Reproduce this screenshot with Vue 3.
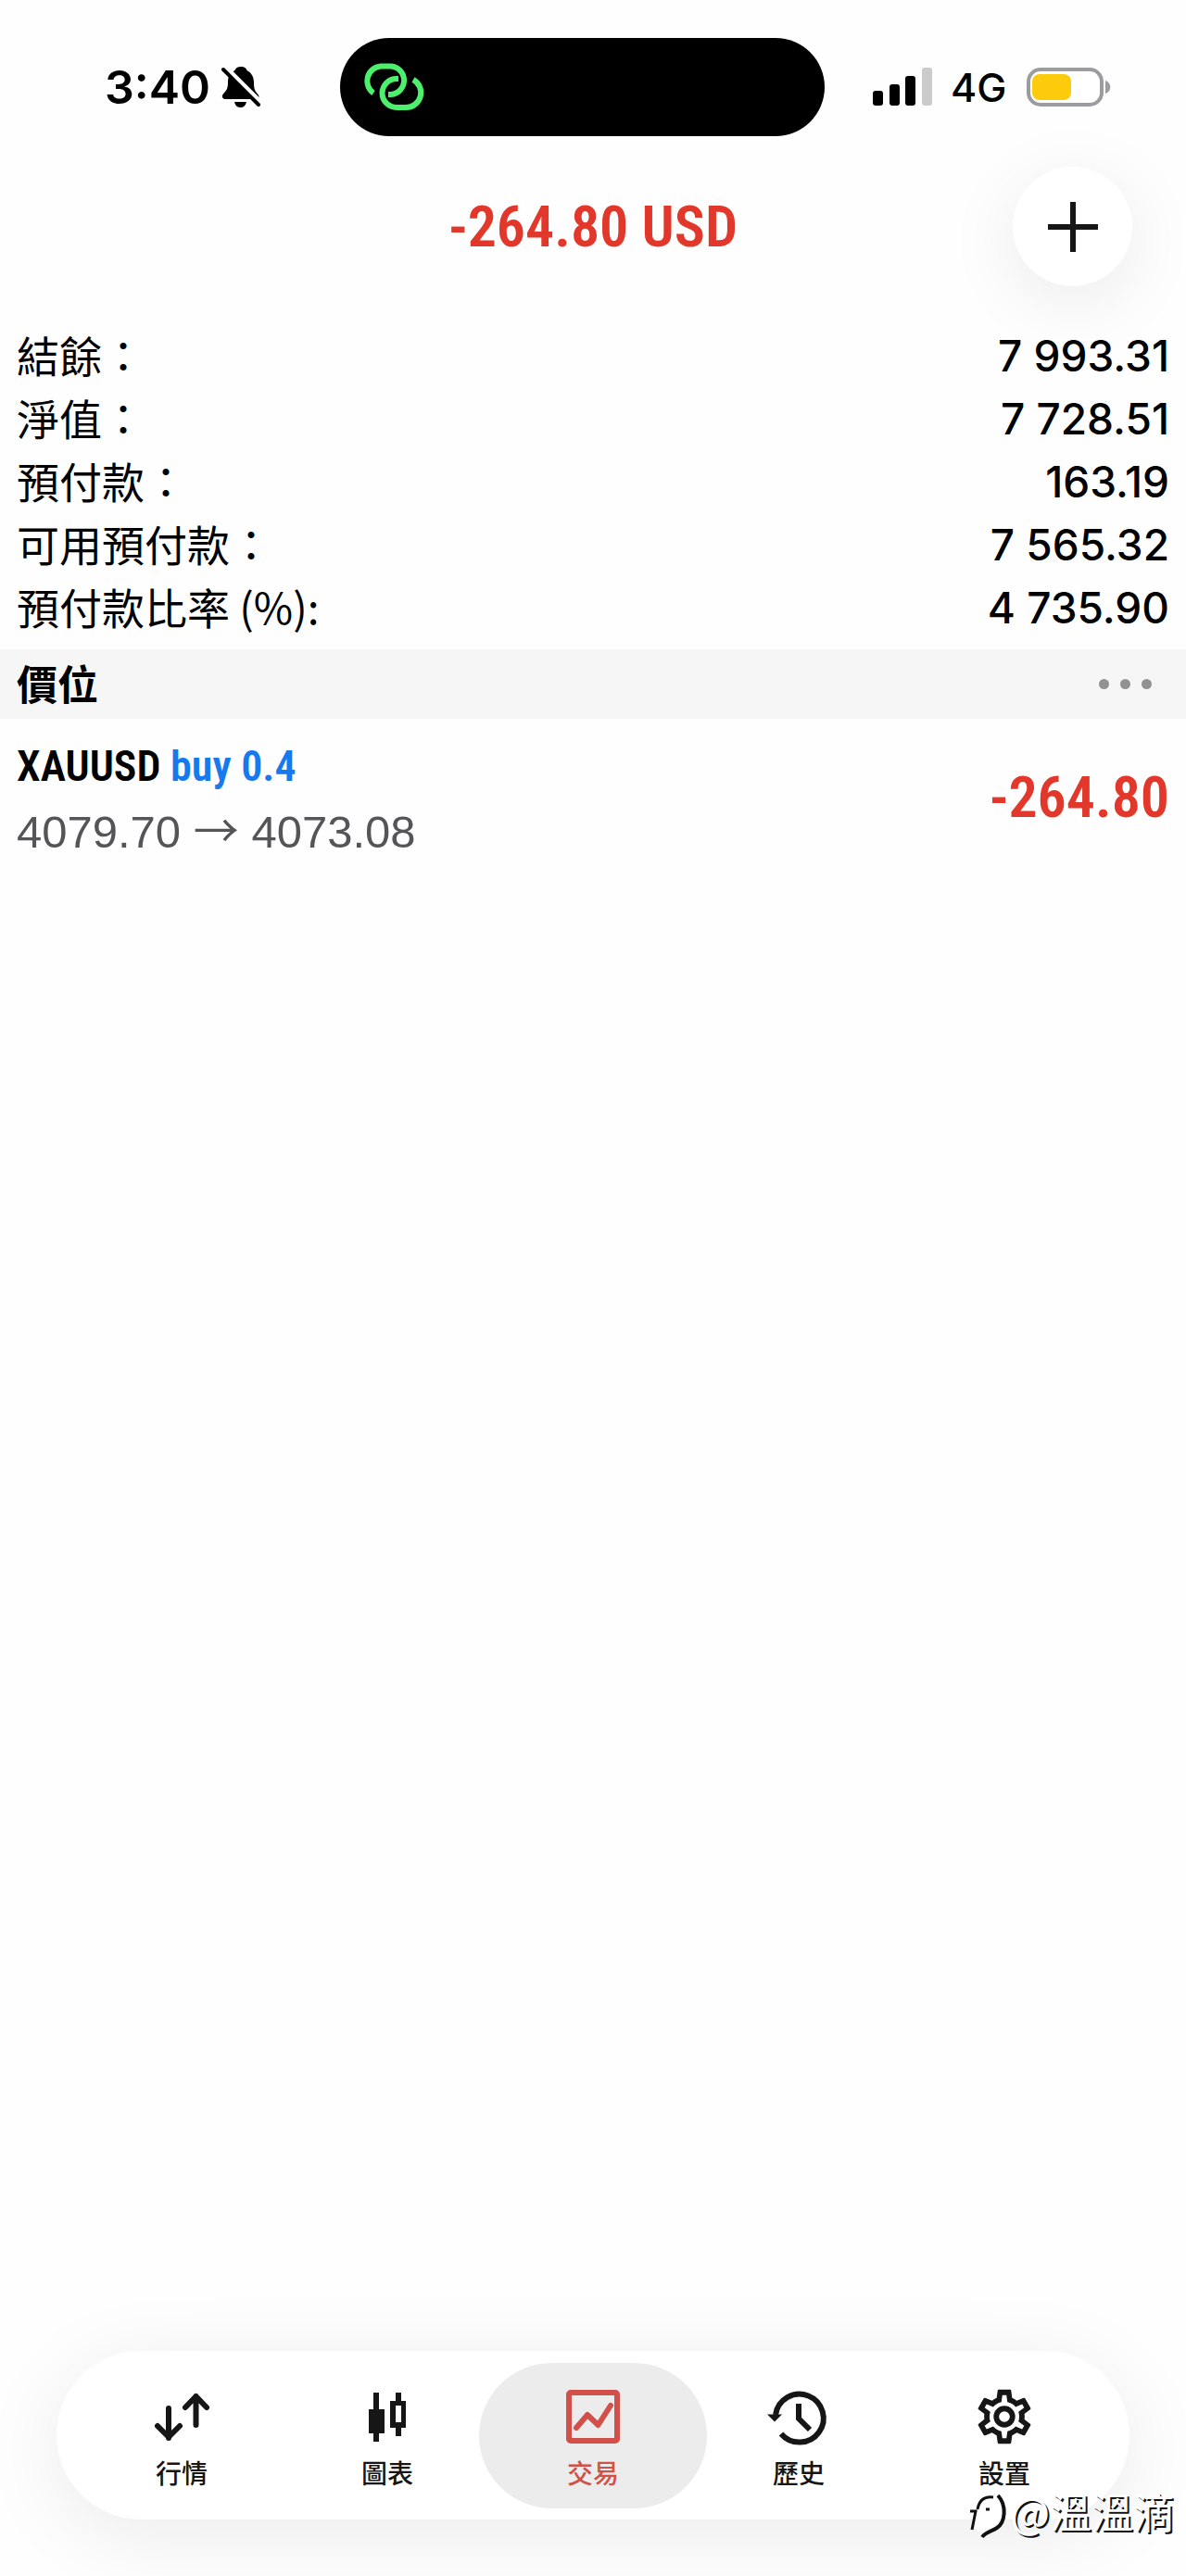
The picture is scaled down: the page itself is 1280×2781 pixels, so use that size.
<template>
  <div class="screen">
    <header class="status-bar">
      <div class="status-left">
        <span class="clock">3:40</span>
        <svg class="bell" viewBox="0 0 48 50" aria-label="Silent">
          <path d="M25 3C21 3 19 5 18.500 7C13 9 11 14 11 20C11 27 9 29 5.500 33C4 35 5 38 8 38H42C45 38 45 35 43.500 33C40 29 39 27 39 20C39 14 36 9 31.500 7C31 5 29 3 25 3Z" />
          <path d="M18 41H31C30 45 28 47 24.500 47C21 47 19 45 18 41Z" />
          <path class="bell-gap" d="M8 3L48 43" />
          <path class="bell-slash" d="M6 6L44 44" />
        </svg>
      </div>
      <div class="island">
        <svg class="link-icon" viewBox="0 0 80 60">
          <path d="M18 35.500A16 16 0 0 1 26 6.500H37A15.300 15.300 0 0 1 37 37H34" />
          <path d="M45 20H43A15.500 15.500 0 0 0 43 51H53A16 16 0 0 0 61 21" />
        </svg>
      </div>
      <div class="status-right">
        <svg class="signal" viewBox="0 0 64 42" aria-label="Signal">
          <rect x="0" y="25" width="11" height="16" rx="3" />
          <rect x="18" y="18" width="11" height="23" rx="3" />
          <rect x="35" y="9" width="11" height="32" rx="3" />
          <rect class="signal-off" x="53" y="0" width="11" height="41" rx="3" />
        </svg>
        <span class="network">4G</span>
        <svg class="battery" viewBox="0 0 92 42" aria-label="Battery">
          <rect class="battery-shell" x="2" y="2" width="79" height="38" rx="13" />
          <rect class="battery-level" x="6" y="7" width="42" height="28" rx="8" />
          <path class="battery-nub" d="M85 14C92 16 92 26 85 28Z" />
        </svg>
      </div>
    </header>

    <div class="title-bar">
      <h1 class="profit-total">-264.80 USD</h1>
      <button class="add-button" type="button" aria-label="New order">
        <svg viewBox="0 0 54 54"><path d="M27 0V54M0 27H54" /></svg>
      </button>
    </div>

    <main class="content">
      <dl class="account">
        <div v-for="row in account" :key="row.label" class="account-row">
          <dt>{{ row.label }}</dt>
          <dd>{{ row.value }}</dd>
        </div>
      </dl>

      <div class="section-bar">
        <h2>價位</h2>
        <button class="more-button" type="button" aria-label="More">
          <span></span><span></span><span></span>
        </button>
      </div>

      <ul class="positions">
        <li v-for="p in positions" :key="p.symbol" class="position">
          <div>
            <div class="position-name">{{ p.symbol }} <span class="side">{{ p.side }} {{ p.volume }}</span></div>
            <div class="position-price">{{ p.open }} <span class="arrow">→</span> {{ p.current }}</div>
          </div>
          <div class="position-profit">{{ p.profit }}</div>
        </li>
      </ul>
    </main>

    <nav class="tab-bar">
      <button
        v-for="tab in tabs"
        :key="tab.id"
        type="button"
        class="tab"
        :class="{ active: tab.id === activeTab }"
        @click="activeTab = tab.id"
      >
        <svg v-if="tab.id === 'quotes'" class="tab-icon line round" viewBox="0 0 70 70">
          <path d="M21 26V58M9 45L21 57L33 45" />
          <path d="M50.500 44V13M39 25L50.500 13L62 25" />
        </svg>
        <svg v-else-if="tab.id === 'chart'" class="tab-icon" viewBox="0 0 70 70">
          <path d="M20 9H26V27H32V53H26V62H20V53H15V27H20Z" />
          <path fill-rule="evenodd" d="M44 9H50V18H55V47H50V56H44V47H38V18H44ZM44 23V41H50V23Z" />
        </svg>
        <svg v-else-if="tab.id === 'trade'" class="tab-icon line round" viewBox="0 0 70 70">
          <rect x="9" y="9" width="52" height="52" rx="2" />
          <path d="M17 47L29 33L40.500 44L54 23" />
        </svg>
        <svg v-else-if="tab.id === 'history'" class="tab-icon line" viewBox="0 0 70 70">
          <path d="M16 53.500A26 26 0 1 0 10 33" />
          <path d="M35 21V37L47 49" />
          <path class="solid" d="M1 32.500H17L9 40.500Z" />
        </svg>
        <svg v-else class="tab-icon" viewBox="0 0 24 24">
          <path :d="gearPath" />
        </svg>
        <span>{{ tab.label }}</span>
      </button>
    </nav>

    <div class="watermark">
      <svg viewBox="0 0 44 52">
        <path class="mark-fill" d="M4 22C10 4 24 0 32 5C42 12 42 34 32 40C26 44 20 46 16 50L6 40Z" />
        <path d="M1 22H7L3 42M9 20C11 9 18 6 26 7M18 20H22" />
        <path class="mark-heavy" d="M31 5C41 16 39 34 30 40C24 44 18 44 14 50" />
      </svg>
      <span>@溫溫滴</span>
    </div>
  </div>
</template>

<script setup>
import { ref } from 'vue';

const account = [
  { label: '結餘：', value: '7 993.31' },
  { label: '淨值：', value: '7 728.51' },
  { label: '預付款：', value: '163.19' },
  { label: '可用預付款：', value: '7 565.32' },
  { label: '預付款比率 (%):', value: '4 735.90' }
];

const positions = [
  { symbol: 'XAUUSD', side: 'buy', volume: '0.4', open: '4079.70', current: '4073.08', profit: '-264.80' }
];

const tabs = [
  { id: 'quotes', label: '行情' },
  { id: 'chart', label: '圖表' },
  { id: 'trade', label: '交易' },
  { id: 'history', label: '歷史' },
  { id: 'settings', label: '設置' }
];

const activeTab = ref('trade');

const gearPath =
  'M12,8A4,4 0 0,1 16,12A4,4 0 0,1 12,16A4,4 0 0,1 8,12A4,4 0 0,1 12,8M12,10A2,2 0 0,0 10,12A2,2 0 0,0 12,14A2,2 0 0,0 14,12A2,2 0 0,0 12,10M10,22C9.75,22 9.54,21.82 9.5,21.58L9.13,18.93C8.5,18.68 7.96,18.34 7.44,17.94L4.95,18.95C4.73,19.03 4.46,18.95 4.34,18.73L2.34,15.27C2.21,15.05 2.27,14.78 2.46,14.63L4.57,12.97L4.5,12L4.57,11L2.46,9.37C2.27,9.22 2.21,8.95 2.34,8.73L4.34,5.27C4.46,5.05 4.73,4.96 4.95,5.05L7.44,6.05C7.96,5.66 8.5,5.32 9.13,5.07L9.5,2.42C9.54,2.18 9.75,2 10,2H14C14.25,2 14.46,2.18 14.5,2.42L14.87,5.07C15.5,5.32 16.04,5.66 16.56,6.05L19.05,5.05C19.27,4.96 19.54,5.05 19.66,5.27L21.66,8.73C21.79,8.95 21.73,9.22 21.54,9.37L19.43,11L19.5,12L19.43,13L21.54,14.63C21.73,14.78 21.79,15.05 21.66,15.27L19.66,18.73C19.54,18.95 19.27,19.04 19.05,18.95L16.56,17.95C16.04,18.34 15.5,18.68 14.87,18.93L14.5,21.58C14.46,21.82 14.25,22 14,22H10M11.25,4L10.88,6.61C9.68,6.86 8.62,7.5 7.85,8.39L5.44,7.35L4.69,8.65L6.8,10.2C6.4,11.37 6.4,12.64 6.8,13.8L4.68,15.36L5.43,16.66L7.86,15.62C8.63,16.5 9.68,17.14 10.87,17.38L11.24,20H12.76L13.13,17.39C14.32,17.14 15.37,16.5 16.14,15.62L18.57,16.66L19.32,15.36L17.2,13.81C17.6,12.64 17.6,11.37 17.2,10.2L19.31,8.65L18.56,7.35L16.15,8.39C15.38,7.5 14.32,6.86 13.12,6.62L12.75,4H11.25Z';
</script>

<style>
body {
  margin: 0;
  background: #fefefe;
}
</style>

<style scoped>
.screen {
  position: relative;
  display: flex;
  flex-direction: column;
  min-height: 100vh;
  overflow: hidden;
  color: #000;
  font-family: Inter, 'Noto Sans CJK TC', sans-serif;
}

h1,
h2,
dl,
dd,
ul {
  margin: 0;
  padding: 0;
}

button {
  padding: 0;
  border: 0;
  background: none;
  color: inherit;
  font: inherit;
  cursor: pointer;
}

svg {
  display: block;
}

.status-bar {
  display: grid;
  grid-template-columns: 367px 1fr 390px;
  align-items: center;
  padding-top: 41px;
}

.status-left,
.status-right {
  display: flex;
  align-items: center;
}

.status-left {
  gap: 8px;
  padding-left: 113px;
}

.clock {
  font-size: 50px;
  font-weight: 600;
}

.bell {
  width: 48px;
  height: 50px;
}

.bell-gap,
.bell-slash {
  stroke: #fefefe;
  stroke-width: 5;
}

.bell-slash {
  stroke: #000;
  stroke-width: 4;
  stroke-linecap: round;
}

.island {
  height: 106px;
  border-radius: 53px;
  background: #000;
}

.link-icon {
  width: 80px;
  height: 60px;
  margin: 24px 0 0 18px;
  fill: none;
  stroke: #4cf06c;
  stroke-width: 6;
}

.status-right {
  padding-left: 52px;
}

.signal {
  width: 64px;
  height: 42px;
}

.signal-off {
  fill: #cbcbcb;
}

.network {
  margin: 0 22px 0 20px;
  font-size: 43px;
  font-weight: 500;
}

.battery {
  width: 92px;
  height: 42px;
}

.battery-shell {
  fill: #fff;
  stroke: #9b9ca0;
  stroke-width: 4;
}

.battery-level {
  fill: #fbcb0c;
}

.battery-nub {
  fill: #9b9ca0;
}

.title-bar {
  display: grid;
  grid-template-columns: 1fr auto 1fr;
  align-items: center;
  margin-top: 33px;
  padding: 0 58px;
}

.profit-total,
.position-profit,
.position-name {
  font-family: 'Roboto Condensed', 'Open Sans Condensed', 'Noto Sans Condensed', 'Noto Sans CJK TC', sans-serif;
  font-weight: 600;
}

.profit-total,
.position-profit {
  color: #e2382c;
  font-size: 62px;
  line-height: 80px;
}

.profit-total {
  grid-column: 2;
}

.add-button {
  display: grid;
  place-items: center;
  justify-self: end;
  width: 129px;
  height: 129px;
  border-radius: 50%;
  background: #fff;
  box-shadow: 0 16px 80px rgba(0, 0, 0, 0.08);
}

.add-button svg {
  width: 54px;
  height: 54px;
  stroke: #161616;
  stroke-width: 6;
}

.content {
  flex: 1;
  padding-top: 41px;
}

.account {
  padding: 0 18px 11px;
}

.account-row {
  display: flex;
  justify-content: space-between;
  font-size: 46px;
  line-height: 68px;
}

.account-row dt {
  font-family: 'Noto Sans CJK TC', sans-serif;
  line-height: 64px;
}

.account-row dd {
  font-weight: 500;
}

.section-bar {
  display: flex;
  align-items: center;
  justify-content: space-between;
  height: 75px;
  padding: 0 37px 0 18px;
  background: #f6f6f6;
}

.section-bar h2 {
  padding-bottom: 4px;
  font-family: 'Noto Sans CJK TC', sans-serif;
  font-size: 44px;
  font-weight: 700;
  line-height: 64px;
}

.more-button {
  display: flex;
  gap: 12px;
}

.more-button span {
  width: 11px;
  height: 11px;
  border-radius: 50%;
  background: #929292;
}

.positions {
  list-style: none;
}

.position {
  display: flex;
  align-items: center;
  justify-content: space-between;
  padding: 15px 18px;
}

.position-name {
  padding-top: 2px;
  font-size: 46px;
  line-height: 68px;
}

.side {
  color: #1679ee;
}

.position-price {
  color: #555558;
  font-family: 'Liberation Sans', sans-serif;
  font-size: 49px;
  line-height: 66px;
}

.arrow {
  font-family: 'Noto Sans CJK TC', sans-serif;
}

.tab-bar {
  display: flex;
  margin: 0 61px 61px;
  padding: 13px 24px 12px;
  border-radius: 91px;
  background: #fff;
  box-shadow: 0 16px 90px rgba(0, 0, 0, 0.08);
}

.tab {
  position: relative;
  display: flex;
  flex: 1;
  flex-direction: column;
  align-items: center;
  gap: 9px;
  height: 157px;
  padding-top: 23px;
  color: #161616;
  font-family: 'Noto Sans CJK TC', sans-serif;
  font-size: 28px;
  font-weight: 500;
  line-height: 32px;
}

.tab.active {
  color: #d2504a;
}

.tab.active::before {
  content: '';
  position: absolute;
  inset: 0 -12px;
  border-radius: 79px;
  background: #ececec;
}

.tab-icon,
.tab span {
  position: relative;
}

.tab-icon {
  width: 70px;
  height: 70px;
  fill: currentColor;
}

.tab-icon.line {
  fill: none;
  stroke: currentColor;
  stroke-width: 6;
}

.tab-icon.round {
  stroke-linecap: round;
  stroke-linejoin: round;
}

.tab-icon .solid {
  fill: currentColor;
  stroke: none;
}

.watermark {
  position: absolute;
  right: 12px;
  bottom: 40px;
  display: flex;
  align-items: flex-start;
  color: #fff;
  font-family: 'Noto Sans CJK TC', sans-serif;
  font-size: 45px;
  line-height: 44px;
  text-shadow: 2px 2px 0 #111;
}

.watermark svg {
  width: 44px;
  height: 52px;
  fill: none;
  stroke: #111;
  stroke-width: 3;
}

.watermark .mark-fill {
  fill: #fff;
  stroke: none;
}

.watermark .mark-heavy {
  stroke-width: 4;
}
</style>
